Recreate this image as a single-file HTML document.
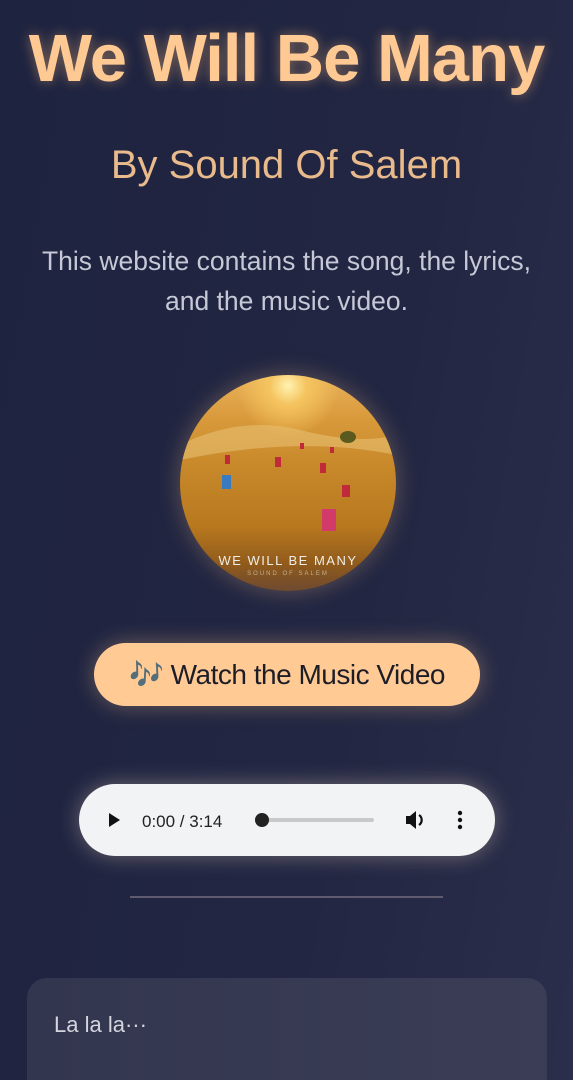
<!DOCTYPE html>
<html><head><meta charset="utf-8"><style>
html,body{margin:0;padding:0;width:573px;height:1080px;overflow:hidden}
body{background:linear-gradient(100deg,#1e2340 0%,#222642 60%,#2b2e4a 100%);font-family:"Liberation Sans",sans-serif;position:relative}
.abs{position:absolute;left:0;width:573px;text-align:center}
h1{margin:0;font-size:67px;font-weight:bold;color:#ffc993;letter-spacing:-1px;text-shadow:0 0 12px rgba(255,190,120,.45);top:20px}
.sub{top:143px;font-size:40px;color:#e9ba8b;font-weight:normal}
.p{top:241px;font-size:26.5px;line-height:40px;color:#c6c8d6}
.img{position:absolute;left:180px;top:375px;width:216px;height:216px;border-radius:50%;overflow:hidden;box-shadow:0 0 24px rgba(255,200,140,.3);
background:radial-gradient(circle at 50% 5%,#fff3b0 0,#f5c460 8%,transparent 22%),linear-gradient(180deg,#e9b25a 0%,#d99a3c 20%,#c98a2c 40%,#b8781e 70%,#8f5a1c 88%,#6e4a30 100%)}
.btn{position:absolute;left:94px;top:643px;width:386px;height:63px;border-radius:32px;background:#ffca94;box-shadow:0 0 22px rgba(255,200,140,.35);font-size:28px;color:#1d1d28;text-align:center;line-height:63px;letter-spacing:-0.5px}
.aud{position:absolute;left:79px;top:784px;width:416px;height:72px;border-radius:36px;background:#f1f3f4;box-shadow:0 0 22px rgba(255,230,200,.35)}
.hr{position:absolute;left:130px;top:896px;width:313px;height:2px;background:#5f5a6e}
.card{position:absolute;left:27px;top:978px;width:520px;height:140px;border-radius:20px;background:linear-gradient(90deg,#33364f,#3b3d56)}
.card span{position:absolute;left:27px;top:34px;font-size:22px;color:#d4d5de}
</style></head><body>
<h1 class="abs">We Will Be Many</h1>
<div class="abs sub">By Sound Of Salem</div>
<div class="abs p">This website contains the song, the lyrics,<br>and the music video.</div>
<div class="img">
<svg width="216" height="216" style="position:absolute;left:0;top:0">
<path d="M0 70 Q60 40 120 55 T216 60 L216 80 Q120 60 0 85Z" fill="#e8c070" opacity=".6"/>
<ellipse cx="168" cy="62" rx="8" ry="6" fill="#5a5a20"/>
<g fill="#c02a3a"><rect x="45" y="80" width="5" height="9"/><rect x="95" y="82" width="6" height="10"/><rect x="140" y="88" width="6" height="10"/><rect x="162" y="110" width="8" height="12"/><rect x="150" y="72" width="4" height="6"/><rect x="120" y="68" width="4" height="6"/></g>
<g fill="#3a7ac0"><rect x="42" y="100" width="9" height="14"/><rect x="95" y="70" width="0" height="0"/></g>
<rect x="142" y="134" width="14" height="22" fill="#d23a6a"/>
<text x="108" y="190" text-anchor="middle" font-family="Liberation Sans" font-size="13" fill="#f0eee8" letter-spacing="1.5">WE WILL BE MANY</text>
<text x="108" y="200" text-anchor="middle" font-family="Liberation Sans" font-size="6" fill="#c0b090" letter-spacing="2">SOUND OF SALEM</text>
</svg></div>
<div class="btn">🎶 Watch the Music Video</div>
<div class="aud">
<svg width="416" height="72" style="position:absolute;left:0;top:0">
<path d="M30 29 L30 43 L41 36 Z" fill="#111"/>
<text x="63" y="43" font-family="Liberation Sans" font-size="17" fill="#222">0:00 / 3:14</text>
<rect x="183" y="34" width="112" height="4" rx="2" fill="#c9c9c9"/>
<circle cx="183" cy="36" r="7" fill="#222"/>
<path d="M327 32 h4 l6 -5 v18 l-6 -5 h-4 Z" fill="#111"/>
<path d="M340 31 a6 6 0 0 1 0 10" stroke="#111" stroke-width="2.2" fill="none"/>
<circle cx="381" cy="29" r="2.2" fill="#111"/><circle cx="381" cy="36" r="2.2" fill="#111"/><circle cx="381" cy="43" r="2.2" fill="#111"/>
</svg></div>
<div class="hr"></div>
<div class="card"><span>La la la···</span></div>
</body></html>
